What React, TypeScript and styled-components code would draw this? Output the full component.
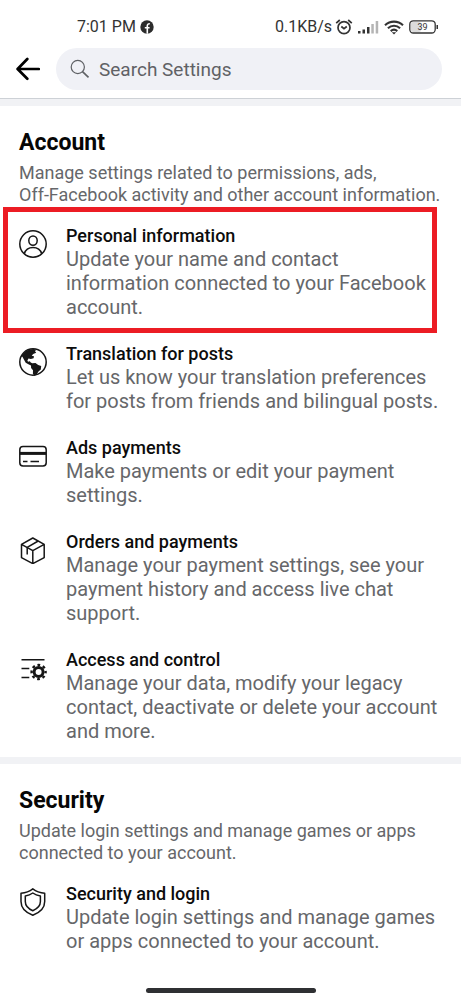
import React from "react";
import styled, { createGlobalStyle } from "styled-components";

const GlobalStyle = createGlobalStyle`
  *, *::before, *::after { box-sizing: border-box; }
  body { margin: 0; background: #fff; font-family: Roboto, "Liberation Sans", sans-serif; }
  h1, h2, h3, p, ul { margin: 0; padding: 0; }
`;

const Screen = styled.div`
  display: flex;
  flex-direction: column;
  min-height: 100vh;
  background: #fff;
`;

const StatusBar = styled.div`
  display: flex;
  justify-content: space-between;
  align-items: center;
  padding: 17px 22px 0 77px;
  font-size: 16px;
  line-height: 20px;
  color: #333;
`;

const StatusGroup = styled.div<{ $gap: number }>`
  display: flex;
  align-items: center;
  gap: ${(p) => p.$gap}px;
  svg { display: block; }
`;

const Header = styled.header`
  display: flex;
  align-items: center;
  gap: 16px;
  padding: 11px 19px 8px 16px;
  border-bottom: 1px solid #cdd1d6;
`;

const BackButton = styled.button`
  display: flex;
  padding: 0;
  border: 0;
  background: none;
  svg { display: block; }
`;

const SearchBox = styled.label`
  flex: 1;
  display: flex;
  align-items: center;
  gap: 9px;
  height: 42px;
  padding: 0 14px;
  border-radius: 21px;
  background: #f0f1f6;
`;

const SearchInput = styled.input`
  flex: 1;
  min-width: 0;
  padding: 0;
  border: 0;
  outline: 0;
  background: none;
  font: 19px Roboto, "Liberation Sans", sans-serif;
  color: #5f6165;
  &::placeholder { color: #5f6165; opacity: 1; }
`;

const Section = styled.section`
  padding: 23px 19px 14px;
  border-top: 7px solid #f1f2f5;
`;

const SectionTitle = styled.h2`
  font-size: 23px;
  font-weight: 700;
  line-height: 28px;
  color: #060606;
`;

const SectionText = styled.p`
  margin: 5px 0 19px;
  font-size: 18px;
  line-height: 22px;
  color: #66676a;
`;

const NoWrap = styled.span`
  white-space: nowrap;
`;

const ItemList = styled.ul`
  display: flex;
  flex-direction: column;
  gap: 24px;
  list-style: none;
`;

const Item = styled.li`
  position: relative;
`;

const ItemLink = styled.a`
  display: flex;
  align-items: flex-start;
  gap: 19px;
  color: inherit;
  text-decoration: none;
`;

const ItemIcon = styled.svg`
  flex: none;
  width: 28px;
  height: 28px;
  margin-top: 5px;
  fill: none;
  stroke: #161616;
  stroke-width: 1.5;
`;

const ItemBody = styled.div`
  flex: 1;
`;

const ItemTitle = styled.h3`
  font-size: 18px;
  font-weight: 500;
  line-height: 22px;
  color: #0c0c0c;
`;

const ItemText = styled.p`
  font-size: 20px;
  line-height: 24px;
  color: #66676a;
`;

const Highlight = styled.div`
  position: absolute;
  inset: -18px 5px -14px -16px;
  border: 5px solid #ec1c24;
  pointer-events: none;
`;

const HomeIndicator = styled.div`
  width: 170px;
  height: 5px;
  margin: auto auto 7px;
  border-radius: 3px;
  background: #2f3033;
`;

const PersonIcon = () => (
  <ItemIcon viewBox="0 0 28 28">
    <circle cx="14" cy="14" r="13.2" />
    <ellipse cx="14" cy="10.6" rx="4.2" ry="4.7" />
    <path d="M5.3 23.8C6.5 19.7 9.7 17.6 14 17.6s7.500 2.100 8.700 6.200" />
  </ItemIcon>
);

const GlobeIcon = () => (
  <ItemIcon viewBox="0 0 28 28">
    <circle cx="14" cy="14" r="13.2" />
    <path
      fill="#161616"
      stroke="none"
      d="M2.200 8.500C4.500 4 9 1 14.500 1l3.200.7-1.800 1.300 1.300 1.800-3 1.200-1.500 1.700 2.300.6-.4 1.900-2.700.8-2.400-.4-1.100 1.900.6 1.300 1.900-.5.8 1.200 1.600.8 3.200-.3 2.700 1.900 3 1.200-.4 3.400-2.300 2.100-1.700 2.700-2.200 1.600-1.700-2.100.1-3.500-1.900-2.300-.1-2.600-2.600-1.100-2.700-1.500-1.800-3.400-1.500-2.600z"
    />
  </ItemIcon>
);

const CardIcon = () => (
  <ItemIcon viewBox="0 0 28 28">
    <rect x="0.800" y="4.500" width="26.400" height="19.500" rx="3.200" />
    <path d="M1 11.400h26" strokeWidth="3" />
    <path d="M4 19.400h4.500M11.500 19.400h8.500" strokeWidth="1.500" />
  </ItemIcon>
);

const BoxIcon = () => (
  <ItemIcon viewBox="0 0 28 28" strokeLinejoin="round">
    <path d="M13.800 2 25.200 8.400v13.200l-11.400 6-11.300-6V8.400zM2.500 8.400l11.300 6.200 11.400-6.200M13.800 14.600v13" />
    <path d="M19.200 5 8.200 11.400v7" />
  </ItemIcon>
);

const ControlIcon = () => (
  <ItemIcon viewBox="0 0 28 28">
    <path d="M2.500 5.800h23M2.500 14.600h7.800M2.500 23.400h7.800" />
    <circle cx="19.600" cy="18" r="4.500" strokeWidth="3" />
    <circle cx="19.600" cy="18" r="7" strokeWidth="2.400" strokeDasharray="2.750 2.748" strokeDashoffset="1.375" />
  </ItemIcon>
);

const ShieldIcon = () => (
  <ItemIcon viewBox="0 0 28 28" strokeLinejoin="round">
    <path d="M13.800.8C10.500 3.400 6.500 4.800 2 5.200v8.300c0 6.500 4.500 11 11.800 13.700 7.300-2.700 11.900-7.200 11.900-13.700V5.200C21.200 4.800 17.200 3.400 13.800.8z" />
    <path d="M13.800 5c-2.200 1.600-4.600 2.500-7.500 2.900v5.700c0 4.200 2.800 7.200 7.500 9.200 4.700-2 7.600-5 7.600-9.200V7.900C18.500 7.500 16 6.600 13.800 5z" />
  </ItemIcon>
);

interface Setting {
  title: string;
  text: string;
  Icon: React.ComponentType;
  highlighted?: boolean;
}

const accountSettings: Setting[] = [
  {
    title: "Personal information",
    text: "Update your name and contact information connected to your Facebook account.",
    Icon: PersonIcon,
    highlighted: true,
  },
  {
    title: "Translation for posts",
    text: "Let us know your translation preferences for posts from friends and bilingual posts.",
    Icon: GlobeIcon,
  },
  {
    title: "Ads payments",
    text: "Make payments or edit your payment settings.",
    Icon: CardIcon,
  },
  {
    title: "Orders and payments",
    text: "Manage your payment settings, see your payment history and access live chat support.",
    Icon: BoxIcon,
  },
  {
    title: "Access and control",
    text: "Manage your data, modify your legacy contact, deactivate or delete your account and more.",
    Icon: ControlIcon,
  },
];

const securitySettings: Setting[] = [
  {
    title: "Security and login",
    text: "Update login settings and manage games or apps connected to your account.",
    Icon: ShieldIcon,
  },
];

const SettingList = ({ settings }: { settings: Setting[] }) => (
  <ItemList>
    {settings.map(({ title, text, Icon, highlighted }) => (
      <Item key={title}>
        <ItemLink href="#">
          <Icon />
          <ItemBody>
            <ItemTitle>{title}</ItemTitle>
            <ItemText>{text}</ItemText>
          </ItemBody>
        </ItemLink>
        {highlighted && <Highlight />}
      </Item>
    ))}
  </ItemList>
);

export default function App() {
  return (
    <Screen>
      <GlobalStyle />
      <StatusBar>
        <StatusGroup $gap={4}>
          <span>7:01 PM</span>
          <svg width="14" height="14" viewBox="0 0 14 14">
            <circle cx="7" cy="7" r="6.700" fill="#2c2c2c" />
            <path d="M7.300 13.700V6c0-1.600.8-2.300 2.500-2.200M4.800 7.800h4.800" fill="none" stroke="#fff" strokeWidth="1.600" />
          </svg>
        </StatusGroup>
        <StatusGroup $gap={5}>
          <StatusGroup $gap={3}>
            <span>0.1KB/s</span>
            <svg width="18" height="16" viewBox="0 0 18 16" fill="none" stroke="#333" strokeWidth="1.700">
              <circle cx="9" cy="8.700" r="6" />
              <path d="M1.200 4.200 4.800 1M16.800 4.200 13.200 1M6.300 7.500 9 9.700l2.800-2.200" />
            </svg>
          </StatusGroup>
          <svg width="21" height="14" viewBox="0 0 21 14">
            <path d="M0 11h2.500v2.500H0zM4.500 9.500H7v4H4.500zM9 7h2.500v6.500H9z" fill="#333" />
            <path d="M13.300 4h2.500v9.500h-2.500zM17.700 1h2.500v12.500h-2.500z" fill="#b4b4b4" />
          </svg>
          <svg width="20" height="15" viewBox="0 0 20 15" fill="none" stroke="#333" strokeWidth="2.100">
            <path d="M1 5.200c5.200-4.800 12.800-4.800 18 0M3.900 8.200c3.600-3.200 8.600-3.200 12.200 0M6.700 11.100c2-1.700 4.600-1.700 6.600 0" />
            <path d="M7.800 12.200h4.400L10 14.600z" fill="#333" stroke="none" />
          </svg>
          <svg width="30" height="14" viewBox="0 0 30 14">
            <rect x="2" y="2" width="10" height="10" rx="2" fill="#dcdcdc" />
            <rect x="0.800" y="0.800" width="25.400" height="12.200" rx="3.500" fill="none" stroke="#333" strokeWidth="1.300" />
            <path d="M27.500 5h1.500v4h-1.500z" fill="#333" />
            <text x="13.500" y="10.400" textAnchor="middle" fontSize="9" fill="#333">39</text>
          </svg>
        </StatusGroup>
      </StatusBar>
      <Header>
        <BackButton aria-label="Back">
          <svg width="24" height="24" viewBox="0 0 24 24" fill="none" stroke="#000" strokeWidth="2.700" strokeLinecap="round" strokeLinejoin="round">
            <path d="M11.300 2 1.600 12l9.700 9.800M1.800 12H22.800" />
          </svg>
        </BackButton>
        <SearchBox>
          <svg width="20" height="20" viewBox="0 0 20 20" fill="none" stroke="#5f6165">
            <circle cx="7.800" cy="8" r="6.600" strokeWidth="1.200" />
            <path d="m12.500 12.700 6 5.700" strokeWidth="1.700" />
          </svg>
          <SearchInput type="text" placeholder="Search Settings" aria-label="Search Settings" />
        </SearchBox>
      </Header>
      <main>
        <Section>
          <SectionTitle>Account</SectionTitle>
          <SectionText>
            Manage settings related to permissions, ads, <NoWrap>Off-Facebook</NoWrap> activity and other account
            information.
          </SectionText>
          <SettingList settings={accountSettings} />
        </Section>
        <Section>
          <SectionTitle>Security</SectionTitle>
          <SectionText>Update login settings and manage games or apps connected to your account.</SectionText>
          <SettingList settings={securitySettings} />
        </Section>
      </main>
      <HomeIndicator />
    </Screen>
  );
}
